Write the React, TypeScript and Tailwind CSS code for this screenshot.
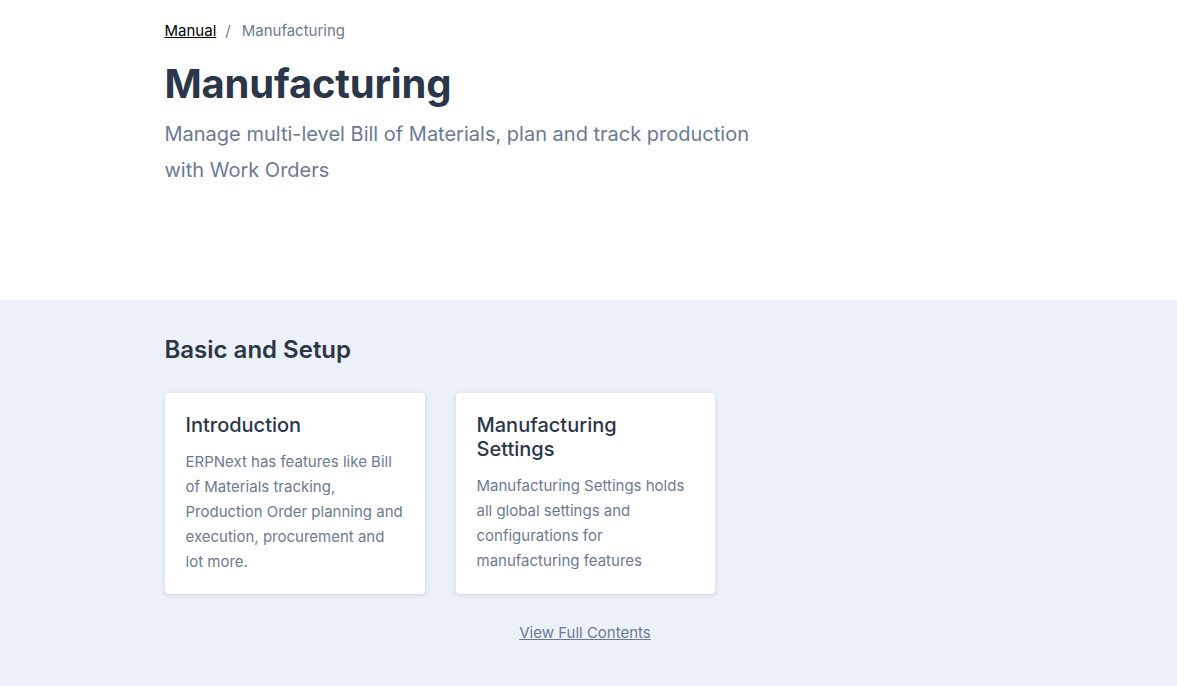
const cards = [
  {
    title: "Introduction",
    body: "ERPNext has features like Bill of Materials tracking, Production Order planning and execution, procurement and lot more.",
  },
  {
    title: "Manufacturing Settings",
    body: "Manufacturing Settings holds all global settings and configurations for manufacturing features",
  },
];

export default function App() {
  return (
    <div className="min-h-screen bg-white font-['Inter',sans-serif] antialiased">
      <section className="h-[300px]">
        <div className="mx-auto w-[848px] pt-[21px]">
          <nav className="flex items-center text-[15px] leading-5 text-[#6b7a94]">
            <a href="#" className="text-black underline">
              Manual
            </a>
            <span className="ml-[9px] mr-[11px]">/</span>
            <span>Manufacturing</span>
          </nav>
          <h1 className="mt-[18px] text-[40px] font-bold leading-[50px] tracking-[-0.2px] text-[#2b3649]">
            Manufacturing
          </h1>
          <p className="mt-[7px] max-w-[600px] text-[20px] leading-9 text-[#6b7a94]">
            Manage multi-level Bill of Materials, plan and track production with Work Orders
          </p>
        </div>
      </section>
      <section className="min-h-[386px] bg-[#ecf1f8] pb-10">
        <div className="mx-auto w-[848px] pt-[34px]">
          <h2 className="text-2xl font-semibold leading-8 text-[#2b3649]">Basic and Setup</h2>
          <div className="mt-[27px] grid grid-cols-[260px_259px] gap-[31px]">
            {cards.map((c) => (
              <a
                key={c.title}
                href="#"
                className="rounded bg-white pb-5 pl-[21px] pr-[19px] pt-5 shadow-[0_1px_4px_rgba(30,50,90,0.16)]"
              >
                <h3 className="text-xl font-medium leading-6 text-[#2b3649]">{c.title}</h3>
                <p className="mt-3 text-[15px] leading-[25px] text-[#6b7a94]">{c.body}</p>
              </a>
            ))}
          </div>
          <div className="mt-[27px] pr-[7px] text-center text-[15px] leading-6">
            <a href="#" className="text-[#6b7a94] underline">
              View Full Contents
            </a>
          </div>
        </div>
      </section>
    </div>
  );
}
